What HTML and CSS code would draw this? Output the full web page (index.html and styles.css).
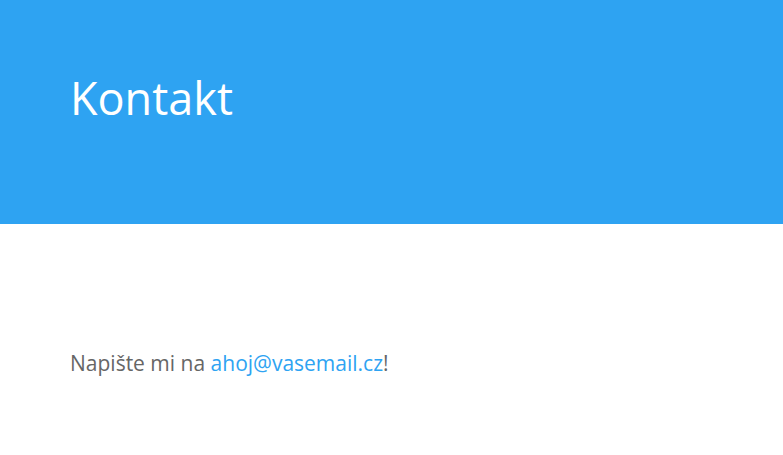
FILE: index.html
```html
<!DOCTYPE html>
<html lang="cs">
<head>
    <meta charset="UTF-8">
    <meta name="viewport" content="width=device-width, initial-scale=1.0">
    <title>Kontakt</title>
    <link rel="stylesheet" href="styles.css">
</head>
<body>

    <header class="hero">
        <h1>Kontakt</h1>
    </header>

    <main class="content">
        <p>Napište mi na <a href="mailto:ahoj@vasemail.cz">ahoj@vasemail.cz</a>!</p>
    </main>

</body>
</html>
```

FILE: styles.css
```css
:root {
    --blue: #2ea3f2;
    --text: #666;
}

* {
    margin: 0;
    padding: 0;
    box-sizing: border-box;
    font-family: "Open Sans", sans-serif;
}

body {
    background-color: #fff;
}

.hero {
    background-color: var(--blue);
    height: 224px;
    padding: 68px 70px 0;
}

.hero h1 {
    color: #fff;
    font-size: 45px;
    font-weight: 400;
    line-height: 60px;
}

.content {
    padding: 124px 70px 0;
}

.content p {
    color: var(--text);
    font-size: 21px;
    line-height: 30px;
}

.content a {
    color: var(--blue);
    text-decoration: none;
}
```
